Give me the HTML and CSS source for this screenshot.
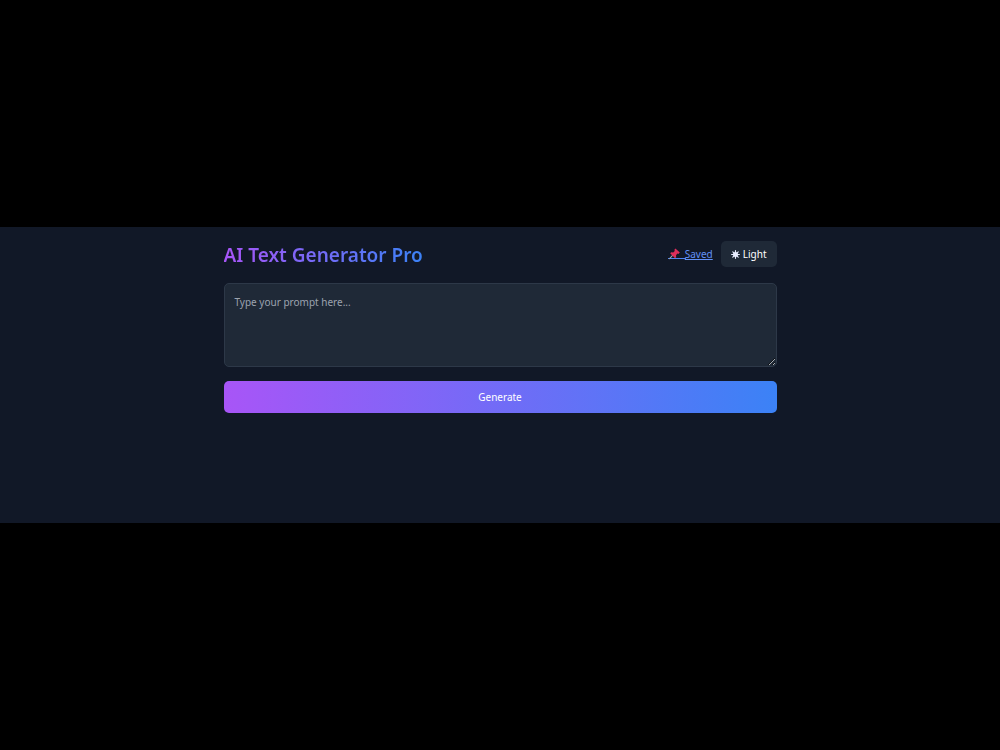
FILE: index.html
```html
<!DOCTYPE html>
<html lang="en">
<head>
<meta charset="utf-8">
<meta name="viewport" content="width=device-width, initial-scale=1">
<title>AI Text Generator Pro</title>
<link rel="stylesheet" href="styles.css">
</head>
<body>
<main class="stage">
  <div class="container">
    <header class="header">
      <h1 class="title">AI Text Generator Pro</h1>
      <nav class="actions">
        <a class="saved" href="#saved"><svg class="pin" viewBox="0 0 12 12" aria-hidden="true"><path d="M4.8 7.2 1.6 10.6" stroke="#9aa5b5" stroke-width="1.1" stroke-linecap="round"/><path d="M7.4 .6 11.8 4.6 10.4 5.9 9.4 5.6 8 7.3 8.2 9.2 7 10.2 2.2 5.3 3.2 4.3 5.2 4.6 6.8 2.9 6.4 1.8Z" fill="#dd2e5b"/></svg>Saved</a>
        <button class="theme" type="button"><svg class="sun" viewBox="0 0 10 10" aria-hidden="true"><circle cx="5" cy="5" r="2.8" fill="#e8edff"/><path d="M5 .7V9.3M.7 5H9.3M2 2 8 8M8 2 2 8" stroke="#e8edff" stroke-width="1.3" stroke-linecap="round"/></svg>Light</button>
      </nav>
    </header>
    <form class="form">
      <textarea class="prompt" aria-label="Prompt" placeholder="Type your prompt here..."></textarea>
      <button class="generate" type="button">Generate</button>
    </form>
  </div>
</main>
</body>
</html>
```
FILE: styles.css
```css
* {
  box-sizing: border-box;
}

body {
  margin: 0;
  min-height: 100vh;
  display: flex;
  align-items: center;
  background: #000;
  color: #fff;
  font-family: "Segoe UI", "Noto Sans", "Open Sans", sans-serif;
  font-size: 10px;
}

.stage {
  width: 100%;
  min-height: 296px;
  padding: 14px;
  background: #111827;
}

.container {
  max-width: 553px;
  margin: 0 auto;
}

.header {
  display: flex;
  align-items: center;
  justify-content: space-between;
  margin-bottom: 16px;
}

.title {
  margin: 0;
  padding-top: 2px;
  font-size: 19px;
  line-height: 24px;
  font-weight: 600;
  background: linear-gradient(to right, #a855f7, #3b82f6);
  background-clip: text;
  -webkit-background-clip: text;
  color: transparent;
}

.actions {
  display: flex;
  align-items: center;
  gap: 8px;
}

.saved {
  display: flex;
  align-items: center;
  gap: 5px;
  color: #6290f6;
  line-height: 14px;
  text-decoration: underline;
  background: linear-gradient(#4f83f0, #4f83f0) 0 11px / 18px 1px no-repeat;
}

.pin {
  width: 12px;
  height: 12px;
  fill: none;
}

.theme {
  display: flex;
  align-items: center;
  gap: 3px;
  height: 26px;
  padding: 0 10px;
  border: 0;
  border-radius: 5px;
  background: #1f2937;
  color: #fff;
  font: inherit;
}

.sun {
  width: 9px;
  height: 9px;
  fill: none;
}

.form {
  display: flex;
  flex-direction: column;
  gap: 14px;
}

.prompt {
  width: 100%;
  height: 84px;
  padding: 10px;
  border: 1px solid #2d3848;
  border-radius: 5px;
  background: #1f2937;
  color: #fff;
  font: inherit;
  line-height: 16px;
  resize: vertical;
}

.prompt::placeholder {
  color: #9ca3af;
}

.generate {
  height: 32px;
  border: 0;
  border-radius: 5px;
  background: linear-gradient(to right, #a855f7, #3b82f6);
  color: #fff;
  font: inherit;
}
```
